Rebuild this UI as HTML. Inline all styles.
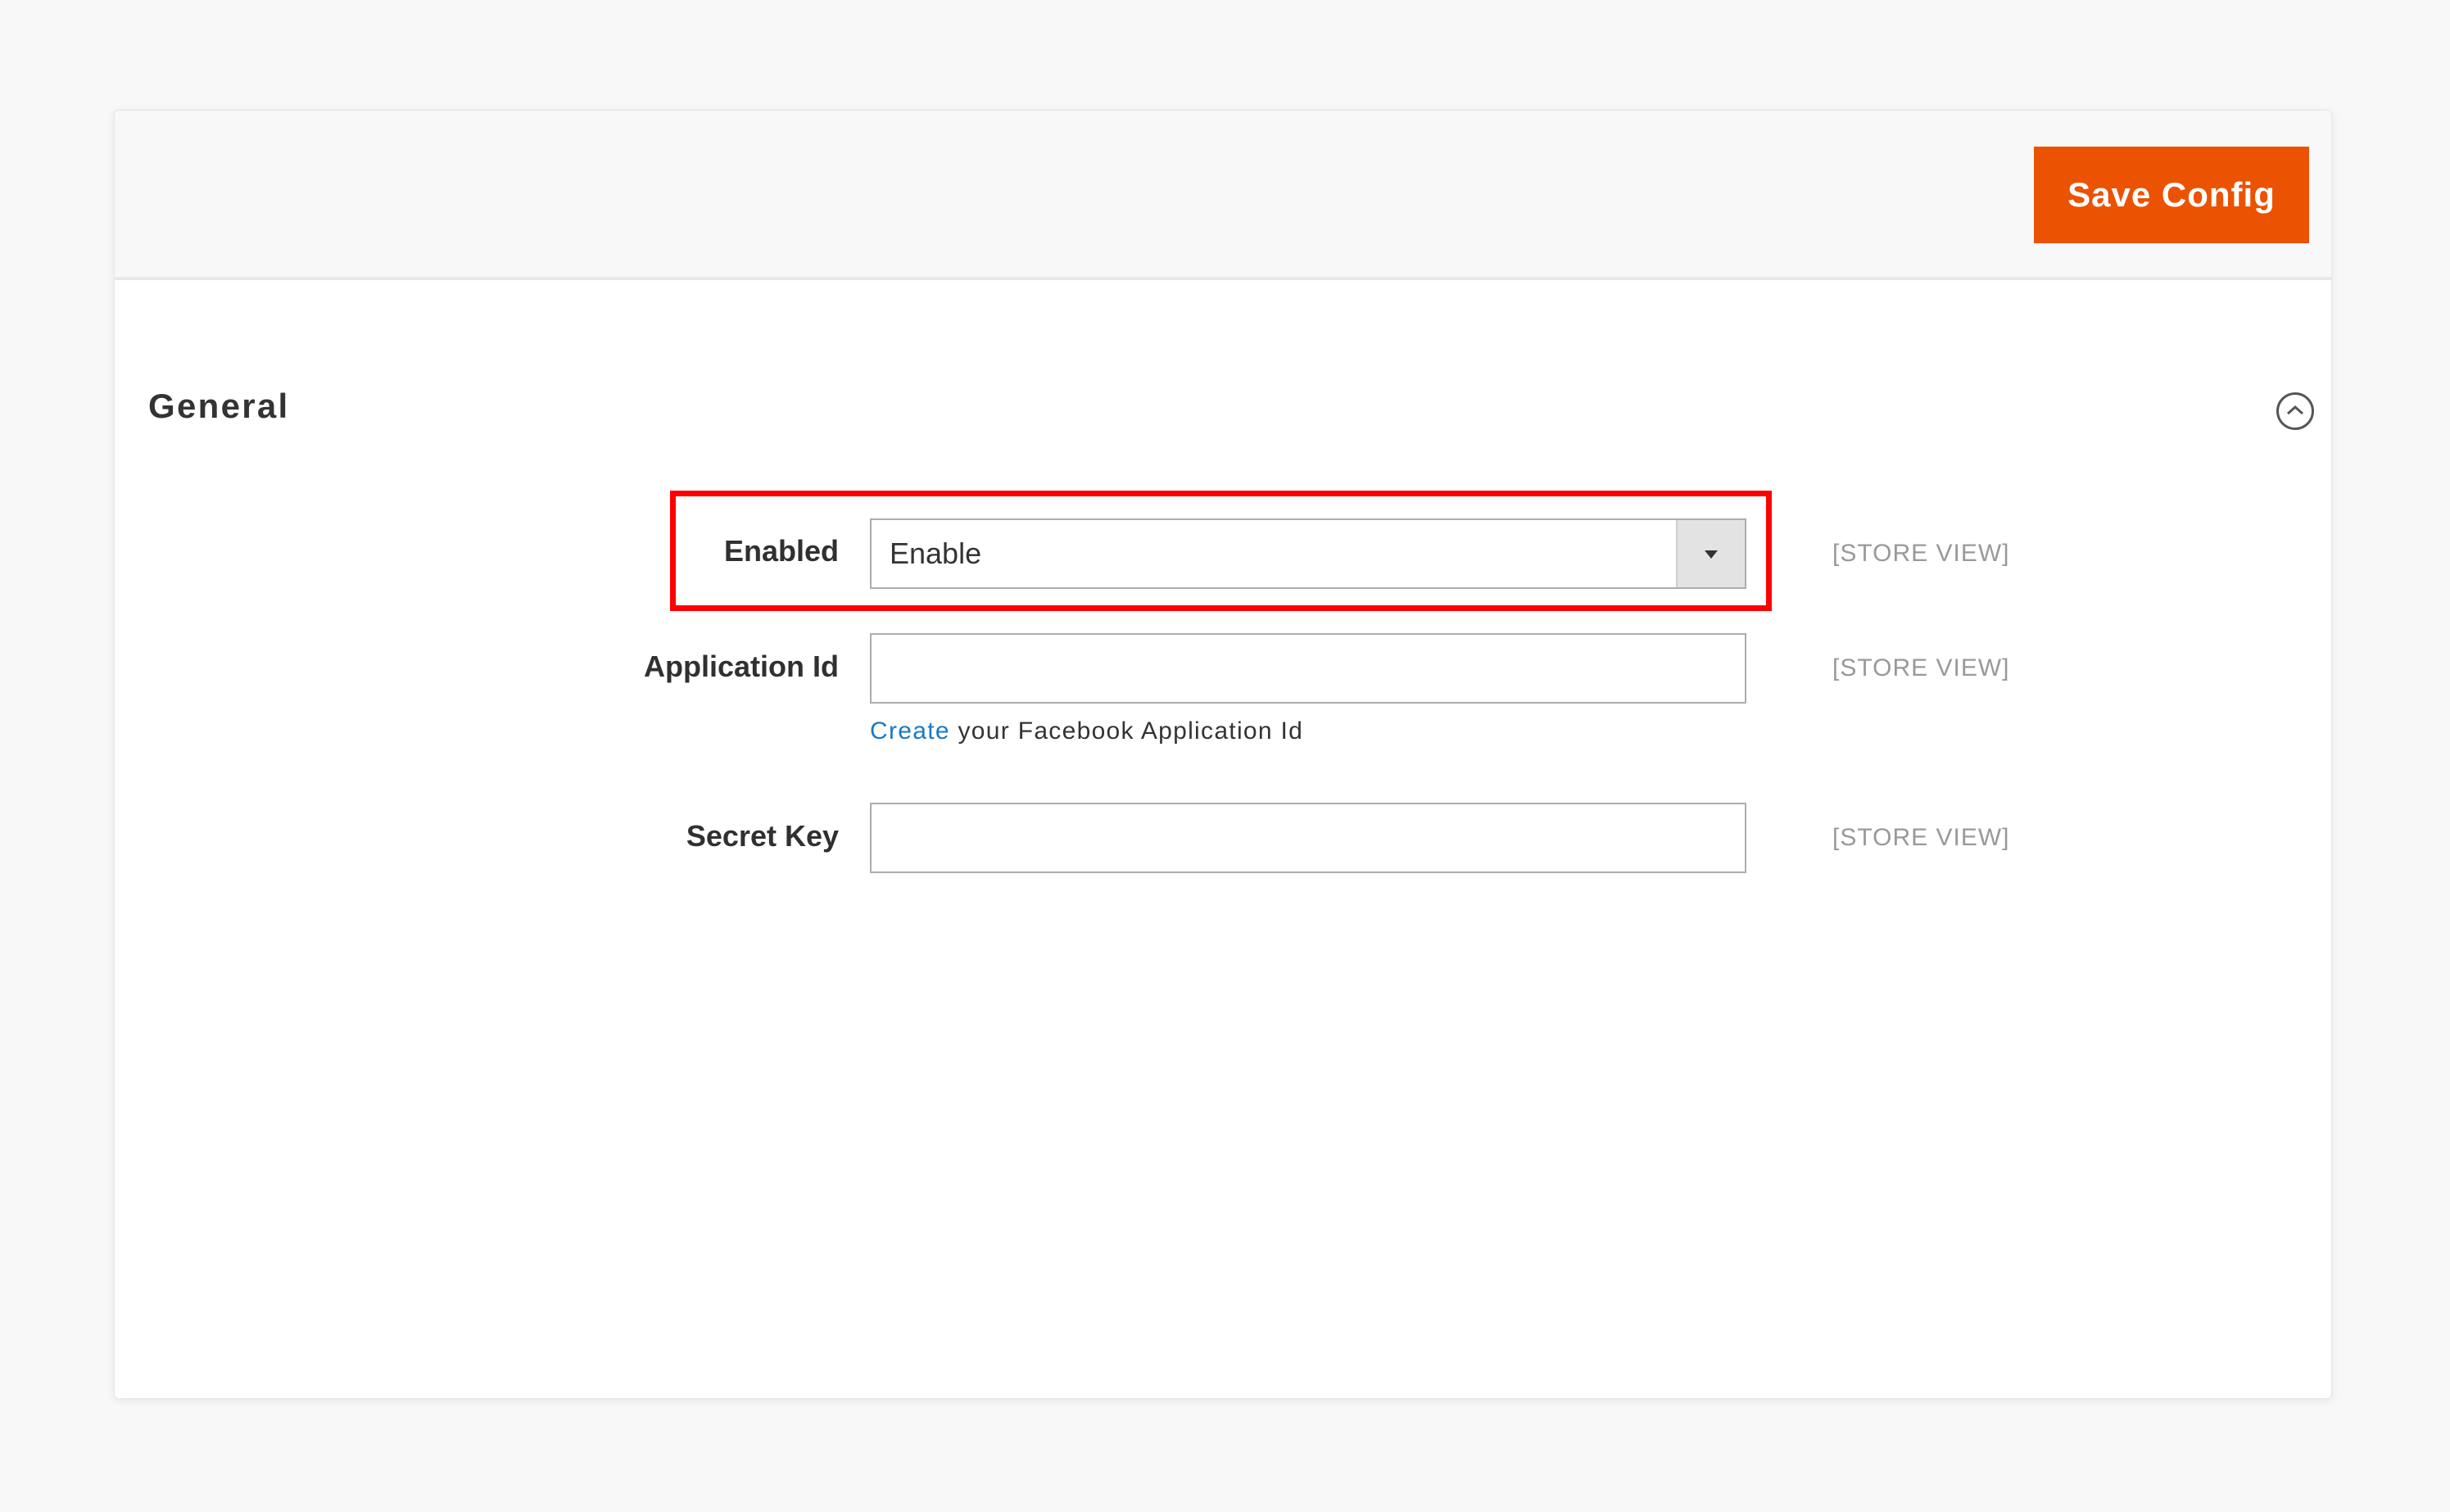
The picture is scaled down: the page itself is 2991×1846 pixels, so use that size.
<!DOCTYPE html>
<html><head><meta charset="utf-8"><style>
html,body{margin:0;padding:0}
body{width:2991px;height:1846px;background:#f8f8f8;position:relative;overflow:hidden;font-family:"Liberation Sans",sans-serif}
.card{position:absolute;left:139px;top:134px;width:2706px;height:1572px;background:#fff;border:1px solid #e6e6e6;border-radius:6px;box-shadow:0 2px 10px rgba(0,0,0,0.08);overflow:hidden}
.head{position:absolute;left:0;top:0;width:100%;height:203px;background:#f8f8f8;border-bottom:4px solid #e8e8e8}
.btn{position:absolute;left:2483px;top:179px;width:336px;height:118px;background:#eb5202;color:#fff;font-weight:bold;font-size:42px;line-height:118px;text-align:center;letter-spacing:1px}
.gen{position:absolute;left:181px;top:472px;font-size:42px;color:#333;font-weight:bold;letter-spacing:2.3px}
.ico{position:absolute;left:2779px;top:479px;width:40px;height:40px;border:3px solid #555;border-radius:50%}
.red{position:absolute;left:818px;top:599px;width:1331px;height:133px;border:7px solid #f00}
.lbl{position:absolute;right:1967px;font-size:36px;color:#303030;font-weight:bold;text-align:right;white-space:nowrap}
.inp{position:absolute;left:1062px;width:1066px;height:82px;border:2px solid #adadad;background:#fff}
.sv{position:absolute;left:2237px;font-size:30px;color:#999;white-space:nowrap;letter-spacing:1px}
</style></head><body>
<div class="card"><div class="head"></div></div>
<div class="btn">Save Config</div>
<div class="gen">General</div>
<div class="ico"><svg width="40" height="40" viewBox="0 0 40 40" style="position:absolute;left:0;top:0"><path d="M11 23 L20 15 L29 23" fill="none" stroke="#555" stroke-width="3"/></svg></div>
<div class="red"></div>
<div class="lbl" style="top:652px">Enabled</div>
<div class="inp" style="top:633px"><span style="position:absolute;left:22px;top:20px;font-size:36px;color:#333">Enable</span><div style="position:absolute;right:0;top:0;width:82px;height:82px;background:#e3e3e3;border-left:2px solid #cfcfcf"><svg width="82" height="82" style="position:absolute;left:0;top:0"><path d="M33 37 L49 37 L41 47 Z" fill="#333"/></svg></div></div>
<div class="sv" style="top:659px">[STORE VIEW]</div>
<div class="lbl" style="top:793px">Application Id</div>
<div class="inp" style="top:773px"></div>
<div class="sv" style="top:799px">[STORE VIEW]</div>
<div style="position:absolute;left:1062px;top:876px;font-size:30px;color:#333;white-space:nowrap;letter-spacing:1.3px"><span style="color:#1979c3">Create</span> your Facebook Application Id</div>
<div class="lbl" style="top:1000px">Secret Key</div>
<div class="inp" style="top:980px"></div>
<div class="sv" style="top:1006px">[STORE VIEW]</div>
</body></html>
